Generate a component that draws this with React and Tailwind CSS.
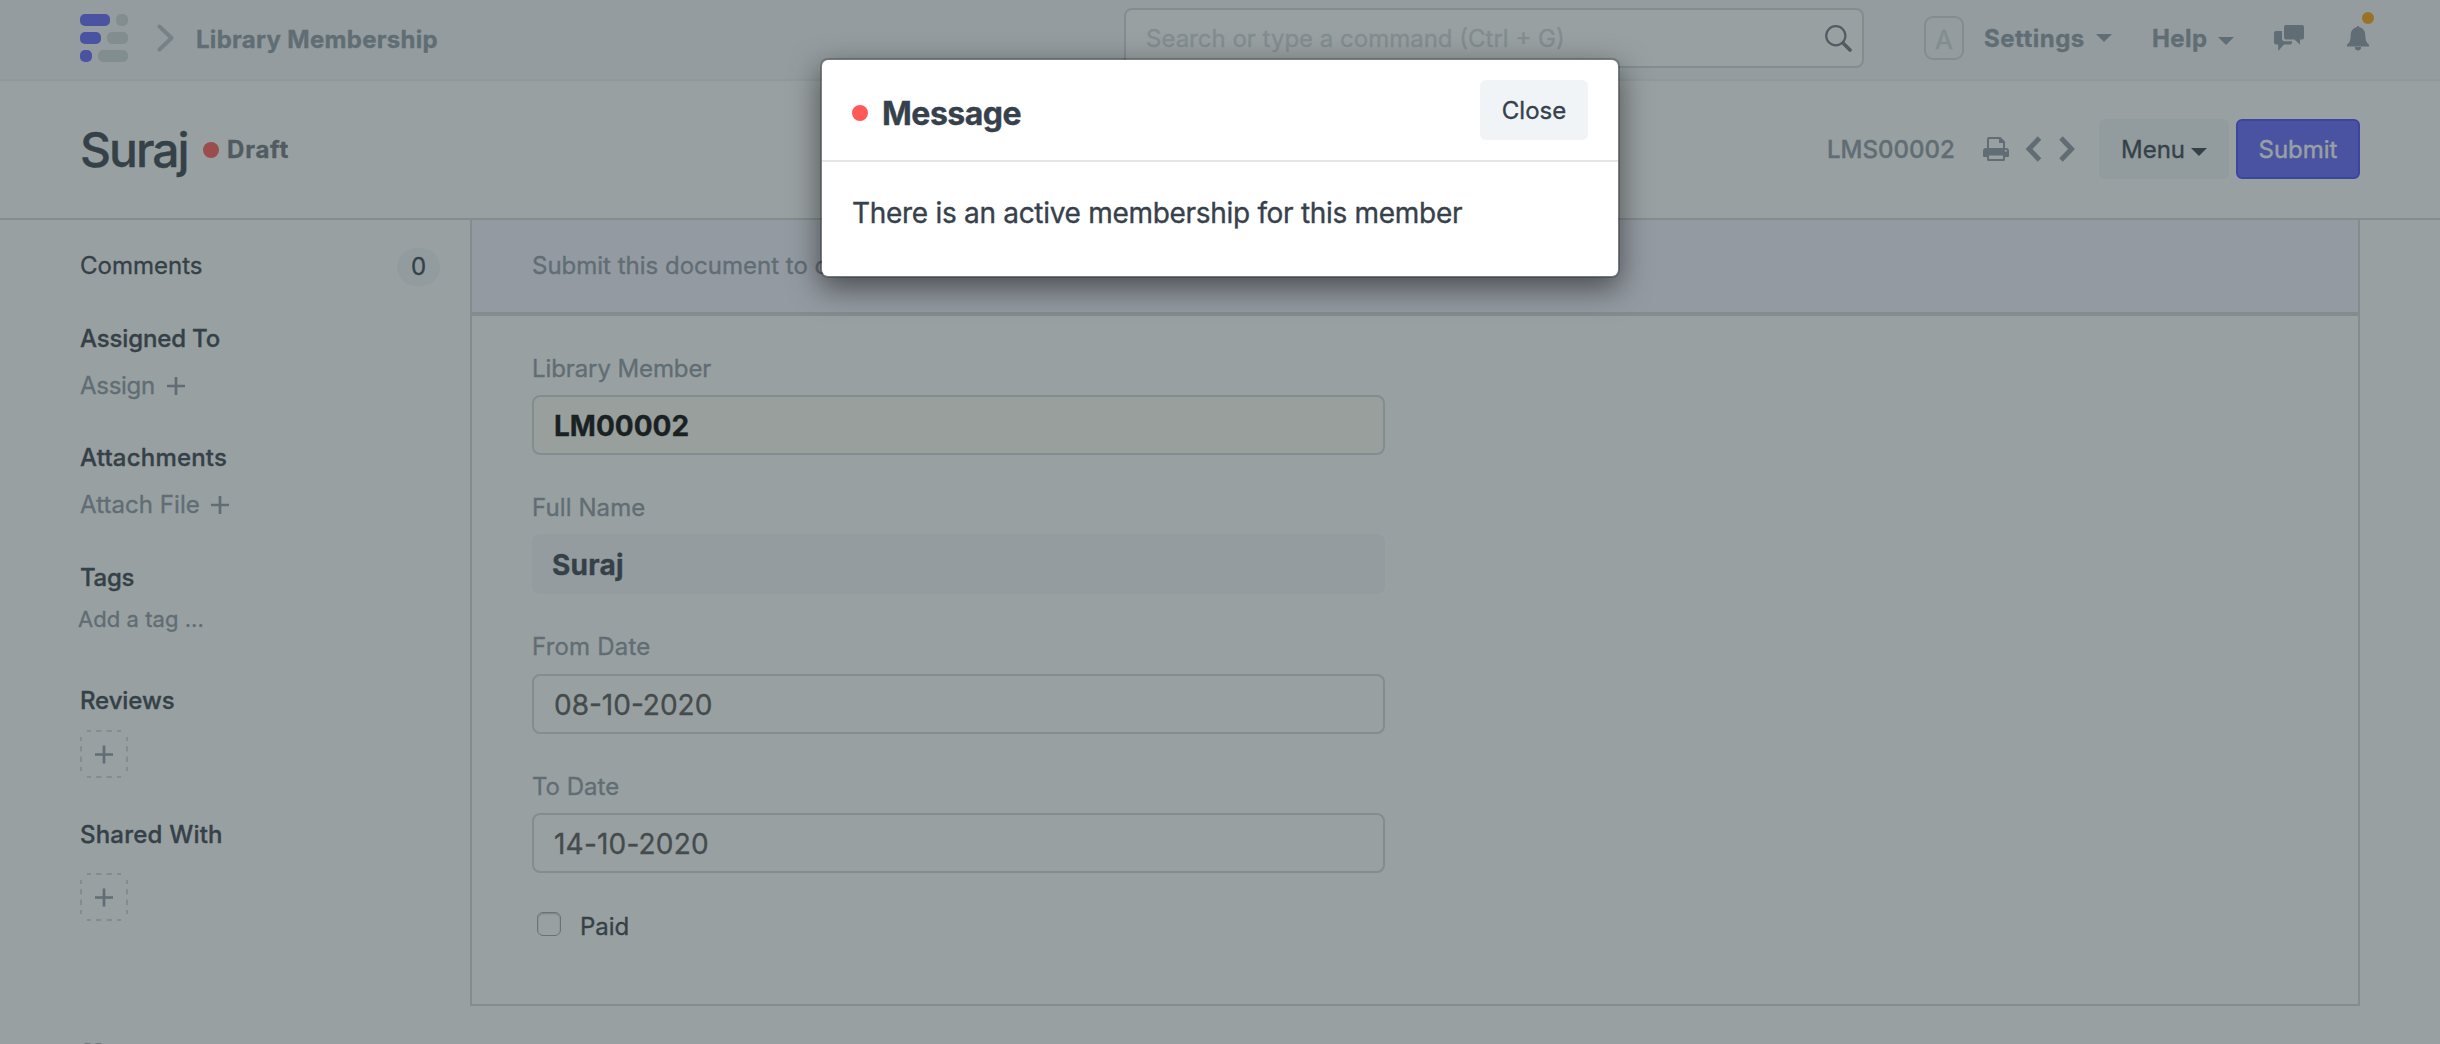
import React from "react";

function Caret({ className }) {
  return (
    <svg viewBox="0 0 16 8" className={`h-[8px] w-[16px] shrink-0 ${className}`}>
      <path d="M0 0h16L8 8z" fill="currentColor" />
    </svg>
  );
}

function Logo() {
  return (
    <svg viewBox="0 0 48 48" className="h-[48px] w-[48px] shrink-0">
      <g fill="#5e64ff">
        <rect width="30" height="12" rx="5" />
        <rect y="18" width="21" height="12" rx="5" />
        <rect y="36" width="12" height="12" rx="5" />
      </g>
      <g fill="#d1d8dd">
        <rect x="36" width="12" height="12" rx="5" />
        <rect x="27" y="18" width="21" height="12" rx="5" />
        <rect x="18" y="36" width="30" height="12" rx="5" />
      </g>
    </svg>
  );
}

function PrintIcon() {
  return (
    <svg viewBox="0 0 26 24" className="h-[24px] w-[26px] shrink-0">
      <path d="M5 13V2a1 1 0 0 1 1-1h11l4 4v8" fill="none" stroke="#8d99a6" strokeWidth="2" />
      <path d="M16 1v5h5.500V5l-4-4z" fill="#8d99a6" />
      <path d="M3 11h20a3 3 0 0 1 3 3v5a1 1 0 0 1-1 1H1a1 1 0 0 1-1-1v-5a3 3 0 0 1 3-3z" fill="#8d99a6" />
      <rect x="5" y="17.500" width="16" height="5.500" rx=".5" fill="#fff" stroke="#8d99a6" strokeWidth="2" />
      <circle cx="22.800" cy="13.800" r="1" fill="#fff" />
    </svg>
  );
}

function ChatIcon() {
  return (
    <svg viewBox="0 0 30 26" className="h-[26px] w-[30px] shrink-0" fill="#8d99a6">
      <path d="M12 0h16a2 2 0 0 1 2 2v10.500a2 2 0 0 1-2 2h-2v5.200l-5.500-5.200H12a2 2 0 0 1-2-2V2a2 2 0 0 1 2-2z" />
      <path d="M2 6h6v7.500a2.700 2.700 0 0 0 2.700 2.700H18v1.600a1.700 1.700 0 0 1-1.700 1.700H10L4.200 26v-6.500H2a2 2 0 0 1-2-2V8a2 2 0 0 1 2-2z" />
    </svg>
  );
}

function BellIcon() {
  return (
    <svg viewBox="0 0 22 25" className="h-[25px] w-[22px]" fill="#8d99a6">
      <path d="M11 0c.8 0 1.200.5 1.200 1.300 4 .7 6 3.700 6.100 8.200.1 4.500.9 7.200 3.700 9.300V20.500H0V18.800c2.800-2.100 3.600-4.800 3.700-9.300C3.800 5 5.800 2 9.800 1.300 9.800.5 10.200 0 11 0z" />
      <path d="M7.800 21h6.400a3.200 3.500 0 0 1-6.400 0z" />
    </svg>
  );
}

function Plus({ className }) {
  return (
    <svg viewBox="0 0 18 18" className={`h-[18px] w-[18px] shrink-0 ${className}`}>
      <path d="M9 0v18M0 9h18" stroke="#8d99a6" strokeWidth="2.700" />
    </svg>
  );
}

function Navbar() {
  return (
    <header className="flex h-[81px] shrink-0 items-center border-b-2 border-[#ebeff2] bg-[#f5f7fa] pb-[3px] text-[24px] leading-[30px] font-bold text-[#8d99a6]">
      <div className="flex w-[1124px] shrink-0 items-center pl-[80px]">
        <Logo />
        <svg viewBox="0 0 18 28" className="ml-[29px] h-[28px] w-[18px]">
          <path d="M2.500 2.500l12 11.500-12 11.500" fill="none" stroke="#b8c2cb" strokeWidth="4" strokeLinecap="round" strokeLinejoin="round" />
        </svg>
        <span className="mt-[3px] ml-[21px] tracking-[0.3px]">Library Membership</span>
      </div>
      <div className="flex h-[60px] w-[740px] shrink-0 items-center justify-between rounded-[8px] border-2 border-[#d1d8dd] bg-white pr-[10px] pl-[20px] font-normal">
        <span className="pt-[2px] text-[#d1d8dd]">Search or type a command (Ctrl + G)</span>
        <svg viewBox="0 0 27 27" className="h-[27px] w-[27px]" fill="none" stroke="#6c7680">
          <circle cx="10.800" cy="10.800" r="9.600" strokeWidth="2.200" />
          <path d="M18 18l7 7" strokeWidth="3.600" strokeLinecap="round" />
        </svg>
      </div>
      <div className="ml-[60px] flex h-[44px] w-[40px] shrink-0 items-center justify-center rounded-[9px] border-2 border-[#d1d8dd] text-[26px] font-normal text-[#d1d8dd]">
        <span className="mt-[3px]">A</span>
      </div>
      <div className="ml-[20px] flex w-[128px] shrink-0 items-center justify-between tracking-[0.5px]">
        <span className="pt-[2px]">Settings</span>
        <Caret />
      </div>
      <div className="ml-[40px] flex w-[82px] shrink-0 items-center justify-between tracking-[0.400px]">
        <span className="pt-[2px]">Help</span>
        <Caret className="mt-[6px]" />
      </div>
      <div className="ml-[40px]">
        <ChatIcon />
      </div>
      <div className="relative ml-[43px]">
        <BellIcon />
        <span className="absolute top-[-14px] left-[15px] h-[12px] w-[12px] rounded-full bg-[#ffa00a]" />
      </div>
    </header>
  );
}

function PageHead() {
  return (
    <div className="flex h-[139px] shrink-0 items-center justify-between border-b-2 border-[#d1d8dd] bg-white pr-[80px] pb-px pl-[80px] text-[24px] leading-[30px]">
      <div className="flex items-center">
        <h1 className="w-[123px] pt-[2px] text-[48px] leading-[60px] font-medium tracking-[-2px] text-[#36414c]">Suraj</h1>
        <span className="mt-[2px] h-[16px] w-[16px] rounded-full bg-[#ff5858]" />
        <span className="ml-[8px] pt-[2px] font-bold tracking-[0.800px] text-[#6c7680]">Draft</span>
      </div>
      <div className="flex items-center">
        <span className="w-[156px] pt-[2px] font-medium text-[#8d99a6]">LMS00002</span>
        <PrintIcon />
        <svg viewBox="0 0 18 26" className="ml-[16px] h-[26px] w-[18px]" fill="none" stroke="#8d99a6" strokeWidth="5">
          <path d="M14.500 2L4 13l10.500 11" />
        </svg>
        <svg viewBox="0 0 18 26" className="ml-[15px] h-[26px] w-[18px]" fill="none" stroke="#8d99a6" strokeWidth="5">
          <path d="M3 2l10.500 11L3 24" />
        </svg>
        <button className="ml-[23px] flex h-[60px] w-[130px] items-center justify-between rounded-[6px] bg-[#f0f4f7] pr-[22px] pl-[22px] text-[#36414c]">
          <span className="pt-[2px]">Menu</span>
          <Caret className="mt-[6px]" />
        </button>
        <button className="ml-[7px] h-[60px] w-[124px] rounded-[6px] border-2 border-[#444bff] bg-[#5e64ff] pt-[2px] text-white">
          Submit
        </button>
      </div>
    </div>
  );
}

function AddBox({ className }) {
  return (
    <svg viewBox="0 0 48 48" className={`h-[48px] w-[48px] ${className}`} fill="none">
      <path d="M7 1h34M7 47h34M1 7v34M47 7v34" stroke="#d1d8dd" strokeWidth="2" strokeDasharray="5.500 5" strokeDashoffset="1.500" />
      <path d="M24 15.500v18M15 24.500h18" stroke="#8d99a6" strokeWidth="2.700" />
    </svg>
  );
}

function Sidebar() {
  return (
    <aside className="w-[470px] shrink-0 pt-[28px] pl-[80px] text-[24px] leading-[30px] text-[#36414c]">
      <div className="flex h-[38px] items-start justify-between pr-[30px]">
        <span className="pt-[3px]">Comments</span>
        <span className="flex h-[38px] w-[43px] items-center justify-center rounded-[19px] bg-[#f0f4f7]">0</span>
      </div>
      <h6 className="mt-[38px] font-medium tracking-[-0.150px]">Assigned To</h6>
      <div className="mt-[17px] flex items-center text-[#8d99a6]">
        <span className="tracking-[-0.300px]">Assign</span>
        <Plus className="ml-[12px]" />
      </div>
      <h6 className="mt-[42px] font-medium tracking-[0.200px]">Attachments</h6>
      <div className="mt-[17px] flex items-center text-[#8d99a6]">
        <span className="tracking-[0.050px]">Attach File</span>
        <Plus className="ml-[11px]" />
      </div>
      <h6 className="mt-[43px] font-medium tracking-[-0.300px]">Tags</h6>
      <div className="mt-[11px] ml-[-2px] text-[22px] tracking-[0.050px] text-[#8d99a6]">Add a tag ...</div>
      <h6 className="mt-[52px] font-medium tracking-[-0.100px]">Reviews</h6>
      <AddBox className="mt-[14px]" />
      <h6 className="mt-[42px] font-medium tracking-[0.200px]">Shared With</h6>
      <AddBox className="mt-[23px]" />
      <svg viewBox="0 0 24 22" className="mt-[121px] ml-[1px] h-[22px] w-[24px]">
        <path d="M12 22L2 11C-3 4 5-3 12 3c7-6 15 1 10 8z" fill="#b4bac1" />
      </svg>
    </aside>
  );
}

function Form() {
  return (
    <main className="flex h-[786px] w-[1890px] shrink-0 flex-col border-x-2 border-b-2 border-[#d1d8dd] text-[24px] leading-[30px] text-[#8d99a6]">
      <div className="flex h-[96px] shrink-0 items-center border-b-4 border-[#d1d8dd] bg-[#f3f3ff] pl-[60px]">
        Submit this document to confirm
      </div>
      <div className="flex w-[913px] flex-col pt-[38px] pl-[60px]">
        <label className="tracking-[-0.100px]">Library Member</label>
        <div className="mt-[11px] flex h-[60px] items-center rounded-[8px] border-2 border-[#d1d8dd] bg-[#fffdf4] pt-[2px] pl-[20px] text-[28px] font-bold text-black">
          LM00002
        </div>
        <label className="mt-[38px] tracking-[0.100px]">Full Name</label>
        <div className="mt-[11px] flex h-[60px] items-center rounded-[8px] bg-[#f5f7fa] pt-[2px] pl-[20px] text-[28px] font-bold tracking-[0.250px] text-[#36414c]">
          Suraj
        </div>
        <label className="mt-[38px] tracking-[0.200px]">From Date</label>
        <div className="mt-[12px] flex h-[60px] items-center rounded-[8px] border-2 border-[#d1d8dd] pt-[2px] pl-[20px] text-[28px] text-[#555]">
          08-10-2020
        </div>
        <label className="mt-[38px]">To Date</label>
        <div className="mt-[11px] flex h-[60px] items-center rounded-[8px] border-2 border-[#d1d8dd] pt-[2px] pl-[20px] text-[28px] tracking-[0.200px] text-[#555]">
          14-10-2020
        </div>
        <div className="mt-[39px] flex h-[30px] items-start text-[#36414c]">
          <span className="ml-[5px] h-[24px] w-[24px] rounded-[6px] border border-[#a3a3a3] shadow-[inset_0_1px_2px_rgba(0,0,0,0.25)]" />
          <span className="ml-[19px]">Paid</span>
        </div>
      </div>
    </main>
  );
}

function MessageDialog() {
  return (
    <div className="absolute top-[58px] left-[820px] h-[220px] w-[800px] rounded-[8px] border-2 border-black/20 bg-white bg-clip-padding text-[#36414c] shadow-[0_10px_30px_rgba(0,0,0,0.5)]">
      <div className="flex h-[102px] items-center border-b-2 border-[#e5e5e5] pr-[30px] pl-[30px]">
        <span className="mt-[6px] h-[16px] w-[16px] rounded-full bg-[#ff5858]" />
        <h4 className="mt-[8px] ml-[14px] text-[32px] leading-[40px] font-bold tracking-[-0.500px]">Message</h4>
        <button className="ml-auto h-[60px] w-[108px] rounded-[6px] bg-[#f0f4f7] pt-[2px] text-[24px]">Close</button>
      </div>
      <p className="pt-[31px] pl-[30px] text-[28px] leading-[40px] tracking-[-0.300px]">
        There is an active membership for this member
      </p>
    </div>
  );
}

export default function App() {
  return (
    <div className="relative flex h-[1044px] w-[2440px] flex-col overflow-hidden bg-white font-['Inter',sans-serif] [-webkit-text-stroke:0.35px]">
      <Navbar />
      <PageHead />
      <div className="flex min-h-0 flex-1">
        <Sidebar />
        <Form />
      </div>
      <div className="absolute inset-0 bg-[#334143]/50" />
      <MessageDialog />
    </div>
  );
}
